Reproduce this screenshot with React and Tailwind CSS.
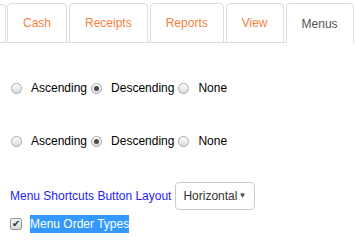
const tabs = ["Cash", "Receipts", "Reports", "View"];

function Radio({ checked }) {
  return (
    <span className="inline-flex h-[11px] w-[11px] items-center justify-center rounded-full border border-[#a9a9a9] bg-gradient-to-b from-[#fdfdfd] to-[#dcdcdc]">
      {checked && <span className="h-[5px] w-[5px] rounded-full bg-[#4a4a4a]" />}
    </span>
  );
}

function SortRow() {
  const opts = [
    { label: "Ascending", checked: false },
    { label: "Descending", checked: true },
    { label: "None", checked: false },
  ];
  return (
    <div className="flex items-center pl-[11px] text-black">
      {opts.map((o) => (
        <label key={o.label} className="flex items-center">
          <Radio checked={o.checked} />
          <span className="ml-[9px] mr-[4px]">{o.label}</span>
        </label>
      ))}
    </div>
  );
}

export default function App() {
  return (
    <div className="h-[240px] w-[356px] overflow-hidden bg-white font-['Liberation_Sans',Arial,sans-serif] text-[12px]">
      <div className="flex h-[43px] items-end pt-[3px]">
        <div className="h-[39px] w-[6px] rounded-tr-[4px] border-r border-t border-[#dddddd] border-b border-b-[#dddddd]" />
        <div className="h-[40px] w-[1px] border-b border-[#dddddd]" />
        {tabs.map((t) => (
          <div key={t} className="flex">
            <div className="flex h-[40px] items-center rounded-t-[4px] border border-[#dddddd] px-[15px] text-[#f7813c]">
              {t}
            </div>
            <div className="h-[40px] w-[2px] border-b border-[#dddddd]" />
          </div>
        ))}
        <div className="flex h-[40px] items-center rounded-t-[4px] border border-b-0 border-[#dddddd] px-[15px] text-[#555555]">
          Menus
        </div>
      </div>

      <div className="mt-[36px]">
        <SortRow />
      </div>
      <div className="mt-[35px]">
        <SortRow />
      </div>

      <div className="mt-[32px] flex items-center pl-[10px]">
        <span className="text-[#2424f2]">Menu Shortcuts Button Layout</span>
        <div className="ml-[4px] flex h-[28px] w-[80px] items-center justify-between rounded-[4px] border border-[#cccccc] pl-[7px] pr-[8px] text-[#333333]">
          <span>Horizontal</span>
          <span className="text-[8px] text-[#444444]">▼</span>
        </div>
      </div>

      <div className="mt-[5px] flex items-center pl-[10px]">
        <span className="flex h-[12px] w-[12px] items-center justify-center rounded-[2px] border border-[#9a9a9a] bg-gradient-to-b from-[#f4f4f4] to-[#d8d8d8] text-[10px] leading-none text-[#333333]">
          ✔
        </span>
        <span className="ml-[8px] bg-[#3399ff] text-white">Menu Order Types</span>
      </div>
    </div>
  );
}
